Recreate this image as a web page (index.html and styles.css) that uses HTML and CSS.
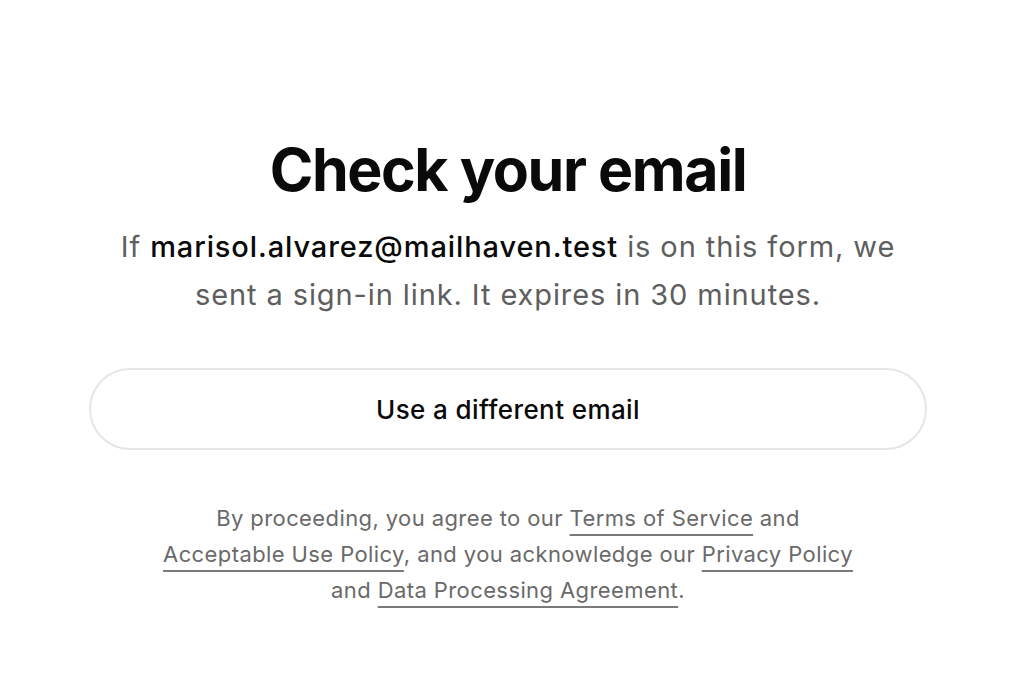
FILE: index.html
```html
<!DOCTYPE html>
<html lang="en">
<head>
<meta charset="utf-8">
<title>Check your email</title>
<link rel="stylesheet" href="styles.css">
</head>
<body>
<main class="page">
  <section class="card">
    <h1 class="title">Check your email</h1>
    <p class="lead">If <strong class="addr">marisol.alvarez@mailhaven.test</strong> is on this form, we sent a sign-in link. It expires in 30 minutes.</p>
    <button class="btn" type="button">Use a different email</button>
    <p class="legal">By proceeding, you agree to our <a href="#">Terms of Service</a> and <a href="#">Acceptable Use Policy</a>, and you acknowledge our <a href="#">Privacy Policy</a> and <a href="#">Data Processing Agreement</a>.</p>
  </section>
</main>
</body>
</html>
```

FILE: styles.css
```css
html, body {
  margin: 0;
  padding: 0;
  background: #ffffff;
}
body {
  font-family: Inter, "Noto Sans", "Liberation Sans", sans-serif;
  color: #0b0b0b;
}
.page {
  display: flex;
  justify-content: center;
  padding-top: 135px;
}
.card {
  width: 838px;
  display: flex;
  flex-direction: column;
  align-items: center;
  text-align: center;
}
.title {
  margin: 0;
  font-size: 59px;
  line-height: 70px;
  font-weight: 700;
  letter-spacing: -1.4px;
  color: #0a0a0a;
}
.lead {
  margin: 18px 0 0;
  width: 790px;
  font-size: 29px;
  line-height: 48px;
  color: #5e5e5e;
  letter-spacing: 0.9px;
}
.addr {
  font-weight: 500;
  color: #0a0a0a;
}
.btn {
  margin-top: 49px;
  width: 838px;
  height: 82px;
  border: 2px solid #e6e6e6;
  border-radius: 41px;
  background: #ffffff;
  font-family: inherit;
  font-size: 26px;
  font-weight: 500;
  letter-spacing: 0.4px;
  color: #0a0a0a;
  cursor: pointer;
}
.legal {
  margin: 50px 0 0;
  width: 700px;
  font-size: 22px;
  line-height: 36px;
  letter-spacing: 0.4px;
  color: #6a6a6a;
}
.legal a {
  color: #6a6a6a;
  text-decoration: underline;
  text-decoration-thickness: 2px;
  text-underline-offset: 8px;
  text-decoration-color: #7a7a7a;
}
```
